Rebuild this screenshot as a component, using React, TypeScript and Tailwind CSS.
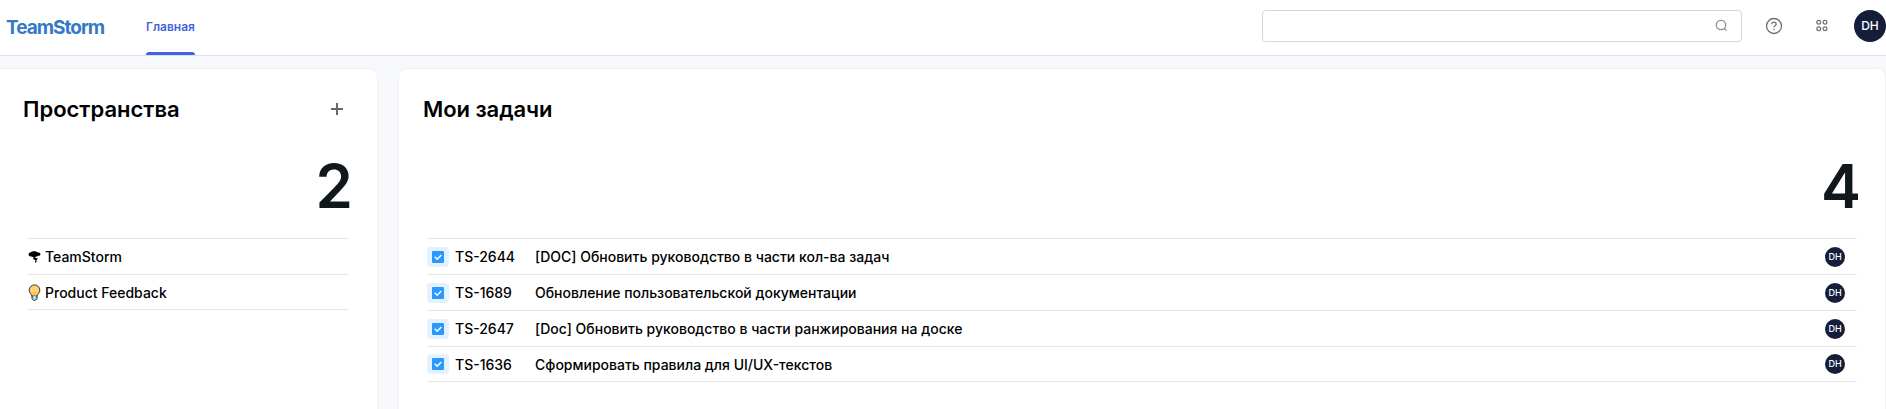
import React from "react";

const inter = "font-['Inter','Noto_Sans',sans-serif]";

function Avatar({ large }: { large?: boolean }) {
  return (
    <span
      className={
        large
          ? "flex size-8 shrink-0 items-center justify-center rounded-full bg-[#141e3a] text-[12px] font-medium text-white"
          : "flex size-5 shrink-0 items-center justify-center rounded-full bg-[#141e3a] text-[9px] font-medium tracking-[-0.2px] text-white"
      }
    >
      DH
    </span>
  );
}

function StormIcon() {
  return (
    <svg width="13" height="13" viewBox="0 0 13 13" className="shrink-0">
      <path d="M3 2.200C4 .9 8.200.9 9.300 2.200c1.700 0 3.200.9 3.200 2 0 1.100-1 1.500-2.300 1.500-.6.7-1.800.8-2.400.9L7.200 7.900l2.600.3-1.200 2-.3.900.4.700L7.400 13l-.3-1.500.4-1.400L4.700 9l1.200-1.200-2.100-1.300C2 6.700.7 6 .5 4.500.5 3.300 1.600 2.500 3 2.200Z" />
    </svg>
  );
}

function BulbIcon() {
  return (
    <svg width="13" height="17" viewBox="0 0 13 17" className="shrink-0">
      <path d="M4 11.500h5v3l-1.500 1.700h-2L4 14.500Z" fill="#9bd3f5" stroke="#1f2326" strokeWidth="1" />
      <path d="M6.500.9a5.300 5.300 0 0 0-5.300 5.300c0 2.600 2 3.300 2.800 5.700h5c.8-2.400 2.800-3.100 2.800-5.700A5.300 5.300 0 0 0 6.500.9Z" fill="#ffd374" stroke="#33302a" strokeWidth="1" />
      <path d="M4.500 8.500h4l-.5 3H5Z" fill="#ffc233" />
      <path d="M5.500 12h2v3.500h-2Z" fill="#b5e2fb" />
    </svg>
  );
}

function TaskIcon() {
  return (
    <span className="flex h-5 w-[22px] shrink-0 items-center justify-center rounded bg-[#e2f2ff]">
      <svg width="12" height="12" viewBox="0 0 12 12">
        <rect width="12" height="12" rx="1" fill="#2b98ff" />
        <path d="M2.700 5.800 5.200 8.200 9.300 4" fill="none" stroke="#fff" strokeWidth="1.500" />
      </svg>
    </span>
  );
}

const spaces = [
  { name: "TeamStorm", icon: <StormIcon /> },
  { name: "Product Feedback", icon: <BulbIcon /> },
];

const tasks = [
  { id: "TS-2644", title: "[DOC] Обновить руководство в части кол-ва задач" },
  { id: "TS-1689", title: "Обновление пользовательской документации" },
  { id: "TS-2647", title: "[Doc] Обновить руководство в части ранжирования на доске" },
  { id: "TS-1636", title: "Сформировать правила для UI/UX-текстов" },
];

function Header() {
  return (
    <header className="flex h-14 shrink-0 items-stretch border-b border-[#dfe1e5] bg-white">
      <div className="w-[146px] pt-[12px] pl-1.5 text-[19px] leading-[32px] font-bold tracking-[-1px] text-[#3579c6]">
        TeamStorm
      </div>
      <nav className="flex">
        <a className="flex flex-col justify-between pt-[19px] text-[12px] leading-4 font-semibold text-[#4263e0]">
          Главная
          <span className="h-[3px] rounded-t-[3px] bg-[#4062e4]" />
        </a>
      </nav>
      <div className="ml-auto flex items-start pt-[10px]">
        <div className="flex h-8 w-[480px] items-center justify-end rounded border border-[#d5d7da] pr-[13px] pb-0.5">
          <svg width="13" height="13" viewBox="0 0 13 13" fill="none" stroke="#878e94" strokeWidth="1.300">
            <circle cx="6" cy="6" r="4.700" />
            <path d="m9.200 9.500 2.300 2" />
          </svg>
        </div>
        <svg className="mt-[7px] ml-[23px]" width="18" height="18" viewBox="0 0 18 18" fill="none" stroke="#697177" strokeWidth="1.300">
          <circle cx="9" cy="9" r="7.500" />
          <path d="M6.900 7.200c0-1.300 1-2 2.100-2s2.100.8 2.100 2c0 1.500-2.100 1.600-2.100 3M9 11.800v1.400" />
        </svg>
        <svg className="mt-[9px] ml-[32px]" width="13" height="13" viewBox="0 0 13 13" fill="none" stroke="#697177" strokeWidth="1.200">
          <circle cx="3.700" cy="3.300" r="1.900" />
          <circle cx="10" cy="3.300" r="1.900" />
          <circle cx="3.700" cy="9.700" r="1.900" />
          <circle cx="10" cy="9.700" r="1.900" />
        </svg>
        <div className="ml-[26px]">
          <Avatar large />
        </div>
      </div>
    </header>
  );
}

const card = "rounded-t-lg border border-b-0 border-[#f0f1f3] bg-white";
const heading = "text-[22px] leading-7 font-semibold";
const counter = "flex h-[88px] items-center justify-end pb-[17px] text-[60px] leading-[72px] font-semibold text-[#11181c]";

export default function App() {
  return (
    <div className={`flex h-[409px] flex-col overflow-hidden bg-[#f7f8fb] text-black ${inter}`}>
      <Header />
      <main className="flex min-h-0 flex-1 gap-[20px] pt-3">
        <section className={`-ml-2 w-[386px] shrink-0 pr-[24px] pl-[30px] ${card}`}>
          <div className="flex h-[81px] items-center justify-between pr-[10px] pb-[2px]">
            <h2 className={heading}>Пространства</h2>
            <svg width="12" height="12" viewBox="0 0 12 12" stroke="#626a71" strokeWidth="2">
              <path d="M6 0v12M0 6h12" />
            </svg>
          </div>
          <div className={counter}>2</div>
          <ul className="mr-1 ml-[4px] border-t border-[#e5e6e8] text-[14px] font-medium">
            {spaces.map((s) => (
              <li key={s.name} className="flex h-9 items-center gap-1 border-b border-[#e5e6e8] pl-[1px] last:h-[35px]">
                {s.icon}
                <span>{s.name}</span>
              </li>
            ))}
          </ul>
        </section>
        <section className={`min-w-0 flex-1 pr-[24px] pl-[24px] ${card}`}>
          <div className="flex h-[81px] items-center pb-[2px]">
            <h2 className={`${heading} tracking-[-0.07px]`}>Мои задачи</h2>
          </div>
          <div className={counter}>4</div>
          <ul className="mr-[4px] ml-[4px] border-t border-[#e5e6e8] text-[14px] font-medium">
            {tasks.map((t) => (
              <li key={t.id} className="flex h-9 items-center border-b border-[#e5e6e8] pr-3 last:h-[35px]">
                <TaskIcon />
                <span className="ml-1.5 w-20">{t.id}</span>
                <span className="flex-1">{t.title}</span>
                <Avatar />
              </li>
            ))}
          </ul>
        </section>
      </main>
    </div>
  );
}
